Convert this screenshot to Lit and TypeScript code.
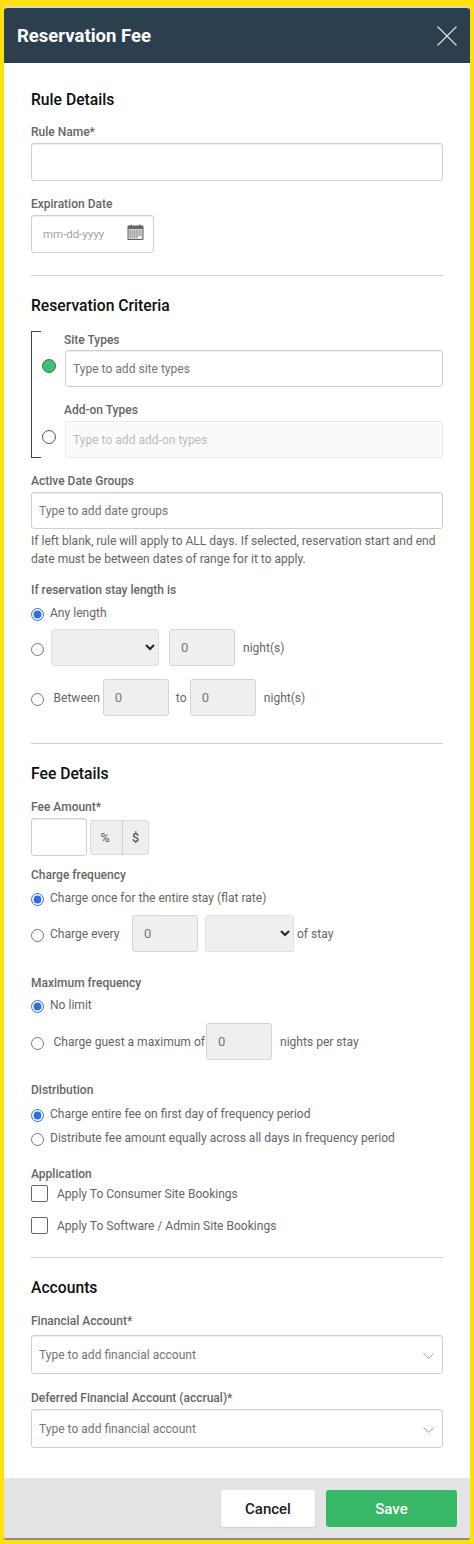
import { LitElement, html, css } from "lit";
import { customElement } from "lit/decorators.js";

@customElement("app-root")
export class AppRoot extends LitElement {
  static styles = css`
    :host { display: block; height: 1544px; background: #ffe009; font-family: "Roboto", "Liberation Sans", sans-serif; overflow: hidden; }
    * { box-sizing: border-box; }
    .page { padding: 6px 4px 0; }
    .card { background: #fff; border-top: 2px solid #d9d9d6; border-radius: 4px 4px 2px 2px; box-shadow: 0 2px 0 #8b8b8b; overflow: hidden; }
    .head { height: 55px; background: #2c3f4e; display: flex; align-items: center; justify-content: space-between; padding: 0 13px 0 13px; }
    .head h1 { margin: 0; font-size: 18.5px; font-weight: 700; color: #fff; }
    .head svg { display: block; margin-top: 1px; }
    .body { padding: 27px 27px 30px; }
    h2 { margin: 0; font-size: 15.7px; line-height: 20px; font-weight: 500; color: #0e0e0e; }
    hr { border: 0; height: 1px; background: #d0d0d0; margin: 22px 0 20px; }
    .lb { display: block; font-size: 12px; line-height: 16px; font-weight: 500; color: #666; }
    .tx { font-size: 12.05px; line-height: 18px; color: #666; white-space: nowrap; }
    .wrap { white-space: normal; }
    .inp { display: block; width: 100%; height: 37px; border: 1px solid #cfcfcf; border-radius: 3px; background: #fff; padding: 0 7px; margin: 0; font: inherit; font-size: 12.05px; color: #666; outline: none; box-shadow: inset 0 1px 1px #eee; }
    .inp::placeholder { color: #757575; opacity: 1; }
    .inp.off { background: #fafafa; border-color: #e9e9e9; box-shadow: none; }
    .inp.off::placeholder { color: #bcbcbc; }
    .num { width: 66px; flex: none; background: #efefef; border-color: #d4d4d4; padding-left: 11px; color: #777; box-shadow: none; font-size: 13px; }
    .sel { display: block; height: 37px; border: 1px solid #e0e0e0; border-radius: 3px; background-color: #efefef; padding: 0; flex: none; font: inherit; color: #222; outline: none; }
    .row { display: flex; align-items: center; }
    input[type="radio"] { width: 13px; height: 13px; margin: 2px 0 0; flex: none; accent-color: #2a6fe6; }
    .r18 { height: 18px; }
    .r37 { height: 37px; }
    .r37 input[type="radio"] { margin-top: 3px; }

    .date { position: relative; width: 123px; height: 38px; margin-top: 3px; }
    .date .inp { height: 38px; padding-left: 11px; font-size: 11.5px; }
    .date .inp::placeholder { color: #a3a3a3; }
    .date svg { position: absolute; left: 96px; top: 9px; }

    .criteria { position: relative; margin-top: 15px; padding: 1px 0 0 11px; }
    .criteria::before { content: ""; position: absolute; left: 0; top: 0; bottom: 0; width: 9px; border: 1px solid #444; border-right: 0; }
    .crit { display: flex; align-items: flex-end; gap: 9px; }
    .crit + .crit { margin-top: 15px; }
    .crit > div { flex: 1; min-width: 0; }
    .crit .lb { margin: 0 0 2px -1px; }
    .crit + .crit .lb { margin-bottom: 3px; }
    .dot { width: 14px; height: 14px; border-radius: 50%; border: 1px solid #555; background: #fff; margin-bottom: 14px; flex: none; }
    .dot.on { background: #3cc274; border-color: #4a6a58; }

    .seg { display: flex; height: 35px; margin-left: 3px; border: 1px solid #dadada; border-radius: 3px; background: #efefef; font-size: 12.5px; color: #555; }
    .seg span { display: flex; align-items: center; justify-content: center; width: 31px; padding-right: 3px; }
    .seg span + span { width: 26px; padding: 0; border-left: 1px solid #d0d0d0; font-weight: 500; }

    .chk { width: 17px; height: 17px; border: 1px solid #666; border-radius: 2px; flex: none; margin-right: 9px; background: #fff; }
    .h17 { height: 17px; }
    .comb { position: relative; height: 39px; }
    .comb .inp { height: 39px; }
    .comb svg { position: absolute; right: 9px; top: 17px; }

    .foot { height: 60px; background: #e4e4e6; display: flex; justify-content: flex-end; gap: 11px; padding: 12px 13px 11px; }
    .btn { height: 37px; border: 0; border-radius: 3px; font: inherit; font-size: 15px; font-weight: 500; padding: 0; }
    .cancel { width: 94px; background: #fff; color: #1c1c1c; box-shadow: 0 1px 2px #ccc; }
    .save { width: 131px; background: #37b866; color: #fff; }

    .m3 { margin-top: 3px; } .m5 { margin-top: 5px; } .m6 { margin-top: 6px; } .m7 { margin-top: 7px; } .m8 { margin-top: 8px; } .m9 { margin-top: 9px; }
    .m11 { margin-top: 11px; } .m13 { margin-top: 13px; } .m14 { margin-top: 14px; } .m15 { margin-top: 15px; } .m16 { margin-top: 16px; }
    .m19 { margin-top: 19px; } .m22 { margin-top: 22px; } .m23 { margin-top: 23px; }
    .gl3 { margin-left: 3px; } .gl6 { margin-left: 6px; } .gl7 { margin-left: 7px; } .gl8 { margin-left: 8px; } .gl9 { margin-left: 9.5px; } .gl10 { margin-left: 10px; }
    .h38 { height: 38px; }
    .hr-top27 { margin-top: 27px; }
    .hr-top23 { margin-top: 23px; }
    .w108 { width: 108px; } .w89 { width: 89px; }
    .fee { width: 56px; }
    .wev { width: 82px; } .wmax { width: 152.5px; } .wto { width: 14px; flex: none; }
  `;

  private chev() {
    return html`<svg width="11" height="8" viewBox="0 0 11 8" fill="none"><path d="M.5 1.5 5.5 6.5 10.5 1.5" stroke="#c98f95" stroke-width="1"/></svg>`;
  }

  render() {
    return html`
      <div class="page"><div class="card">
        <div class="head">
          <h1>Reservation Fee</h1>
          <svg width="20" height="20" viewBox="0 0 20 20" fill="none"><path d="M.5.5l19 19M19.5.5l-19 19" stroke="#dfe5e8" stroke-width="1.1"/></svg>
        </div>
        <div class="body">
          <h2>Rule Details</h2>
          <label class="lb m14">Rule Name*</label>
          <input class="inp h38 m3" />
          <label class="lb m15">Expiration Date</label>
          <div class="date">
            <input class="inp" placeholder="mm-dd-yyyy" />
            <svg width="17" height="16" viewBox="0 0 17 16">
              <path d="M1 2h15v13.5H1z" fill="#d8d8d8" stroke="#5f5f5f"/>
              <path d="M1 2h15v3H1z" fill="#666"/>
              <path d="M4 .5v3M13 .5v3" stroke="#555"/>
              <path d="M2.5 7h12M2.5 9h12M2.5 11h12M2.5 13h8" stroke="#777" stroke-dasharray="1.5 .7"/>
              <path d="M11 12.5h3.5v2H11z" fill="#fff"/>
            </svg>
          </div>
          <hr />

          <h2>Reservation Criteria</h2>
          <div class="criteria">
            <div class="crit">
              <span class="dot on"></span>
              <div><label class="lb">Site Types</label><input class="inp" placeholder="Type to add site types" /></div>
            </div>
            <div class="crit">
              <span class="dot"></span>
              <div><label class="lb">Add-on Types</label><input class="inp off" placeholder="Type to add add-on types" /></div>
            </div>
          </div>
          <label class="lb m15">Active Date Groups</label>
          <input class="inp m3" placeholder="Type to add date groups" />
          <div class="tx wrap m3">If left blank, rule will apply to ALL days. If selected, reservation start and end date must be between dates of range for it to apply.</div>

          <label class="lb m14">If reservation stay length is</label>
          <div class="row r18 m6"><input type="radio" name="a" checked /><span class="tx gl6">Any length</span></div>
          <div class="row r37 m7">
            <input type="radio" name="a" />
            <select class="sel w108 gl7"></select>
            <input class="inp num gl10" value="0" />
            <span class="tx gl8">night(s)</span>
          </div>
          <div class="row r37 m13">
            <input type="radio" name="a" />
            <span class="tx gl9">Between</span>
            <input class="inp num gl3" value="0" />
            <span class="tx gl7 wto">to</span>
            <input class="inp num" value="0" />
            <span class="tx gl8">night(s)</span>
          </div>
          <hr class="hr-top27" />

          <h2>Fee Details</h2>
          <label class="lb m15">Fee Amount*</label>
          <div class="row m3">
            <input class="inp h38 fee" />
            <div class="seg"><span>%</span><span>$</span></div>
          </div>
          <label class="lb m11">Charge frequency</label>
          <div class="row r18 m6"><input type="radio" name="b" checked /><span class="tx gl6">Charge once for the entire stay (flat rate)</span></div>
          <div class="row r37 m8">
            <input type="radio" name="b" />
            <span class="tx gl6 wev">Charge every</span>
            <input class="inp num" value="0" />
            <select class="sel w89 gl7"></select>
            <span class="tx gl3">of stay</span>
          </div>
          <label class="lb m23">Maximum frequency</label>
          <div class="row r18 m5"><input type="radio" name="c" checked /><span class="tx gl6">No limit</span></div>
          <div class="row r37 m9">
            <input type="radio" name="c" />
            <span class="tx gl9 wmax">Charge guest a maximum of</span>
            <input class="inp num" value="0" />
            <span class="tx gl8">nights per stay</span>
          </div>
          <label class="lb m22">Distribution</label>
          <div class="row r18 m7"><input type="radio" name="d" checked /><span class="tx gl6">Charge entire fee on first day of frequency period</span></div>
          <div class="row r18 m6"><input type="radio" name="d" /><span class="tx gl6">Distribute fee amount equally across all days in frequency period</span></div>
          <label class="lb m19">Application</label>
          <div class="row h17 m3"><span class="chk"></span><span class="tx">Apply To Consumer Site Bookings</span></div>
          <div class="row h17 m15"><span class="chk"></span><span class="tx">Apply To Software / Admin Site Bookings</span></div>
          <hr class="hr-top23" />

          <h2>Accounts</h2>
          <label class="lb m15">Financial Account*</label>
          <div class="comb m6"><input class="inp" placeholder="Type to add financial account" />${this.chev()}</div>
          <label class="lb m16">Deferred Financial Account (accrual)*</label>
          <div class="comb m3"><input class="inp" placeholder="Type to add financial account" />${this.chev()}</div>
        </div>
        <div class="foot">
          <button class="btn cancel">Cancel</button>
          <button class="btn save">Save</button>
        </div>
      </div></div>
    `;
  }
}
